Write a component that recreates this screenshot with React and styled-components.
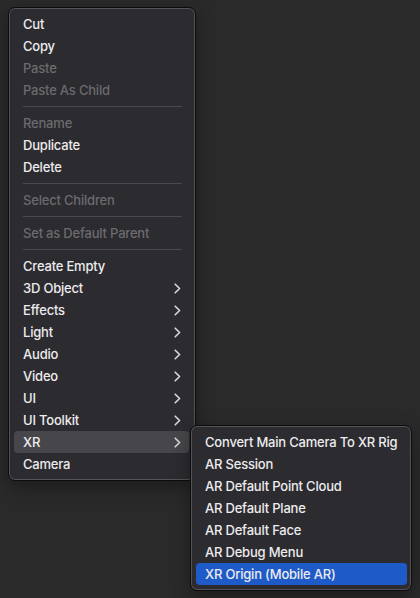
import React from 'react'
import styled, { createGlobalStyle } from 'styled-components'

const GlobalStyle = createGlobalStyle`
  html, body {
    margin: 0;
    padding: 0;
    background: #2a2a2a;
  }
  body {
    font-family: Inter, "Noto Sans", "Liberation Sans", sans-serif;
    -webkit-font-smoothing: antialiased;
  }
`

const mainItems = [
  { label: 'Cut' },
  { label: 'Copy' },
  { label: 'Paste', disabled: true },
  { label: 'Paste As Child', disabled: true },
  { separator: true },
  { label: 'Rename', disabled: true },
  { label: 'Duplicate' },
  { label: 'Delete' },
  { separator: true },
  { label: 'Select Children', disabled: true },
  { separator: true },
  { label: 'Set as Default Parent', disabled: true },
  { separator: true },
  { label: 'Create Empty' },
  { label: '3D Object', submenu: true },
  { label: 'Effects', submenu: true },
  { label: 'Light', submenu: true },
  { label: 'Audio', submenu: true },
  { label: 'Video', submenu: true },
  { label: 'UI', submenu: true },
  { label: 'UI Toolkit', submenu: true },
  { label: 'XR', submenu: true, open: true },
  { label: 'Camera' },
]

const xrItems = [
  'Convert Main Camera To XR Rig',
  'AR Session',
  'AR Default Point Cloud',
  'AR Default Plane',
  'AR Default Face',
  'AR Debug Menu',
  'XR Origin (Mobile AR)',
]

const Chevron = () => (
  <svg width="7" height="11" viewBox="0 0 7 11" fill="none">
    <path d="M1.2 1.2 L5.6 5.5 L1.2 9.8" stroke="#d8d8da" strokeWidth="1.6" strokeLinecap="round" strokeLinejoin="round" />
  </svg>
)

export default function App() {
  return (
    <>
      <GlobalStyle />
      <Page>
        <Menu width={188}>
          {mainItems.map((item, i) =>
            item.separator ? (
              <Separator key={i} />
            ) : (
              <Item key={i} disabled={item.disabled} active={item.open}>
                <span>{item.label}</span>
                {item.submenu && <Chevron />}
                {item.open && (
                  <SubMenu width={222}>
                    {xrItems.map((label, j) => (
                      <Item key={label} selected={j === xrItems.length - 1}>
                        <span>{label}</span>
                      </Item>
                    ))}
                  </SubMenu>
                )}
              </Item>
            )
          )}
        </Menu>
      </Page>
    </>
  )
}

const Page = styled.div`
  width: 420px;
  height: 598px;
  padding: 7px 0 0 8px;
  box-sizing: border-box;
  overflow: hidden;
`

const Menu = styled.div`
  width: ${({ width }) => width}px;
  box-sizing: border-box;
  display: flex;
  flex-direction: column;
  padding: 5px 6px 5px 5px;
  background: #2c2b30;
  border: 1px solid #0c0c0d;
  border-radius: 7px;
  box-shadow: inset 0 0 0 1px #545357, 0 6px 18px rgba(0, 0, 0, 0.35);
`

const SubMenu = styled(Menu)`
  position: absolute;
  top: -6px;
  left: calc(100% + 1px);
  padding: 5px 4px 5px 5px;
  z-index: 2;
`

const Item = styled.div`
  position: relative;
  height: 22px;
  display: flex;
  align-items: center;
  justify-content: space-between;
  padding: 0 8px 0 9px;
  border-radius: 4px;
  font-size: 13px;
  font-weight: 500;
  letter-spacing: -0.2px;
  white-space: nowrap;
  color: ${({ disabled }) => (disabled ? '#6b6a6e' : '#ececee')};
  background: ${({ active, selected }) =>
    selected ? '#1f5bc8' : active ? '#47464b' : 'transparent'};

  svg {
    flex-shrink: 0;
  }
`

const Separator = styled.div`
  height: 11px;
  display: flex;
  align-items: center;
  padding: 0 7px 0 9px;

  &::after {
    content: '';
    flex: 1;
    height: 1px;
    background: #4a494d;
  }
`
